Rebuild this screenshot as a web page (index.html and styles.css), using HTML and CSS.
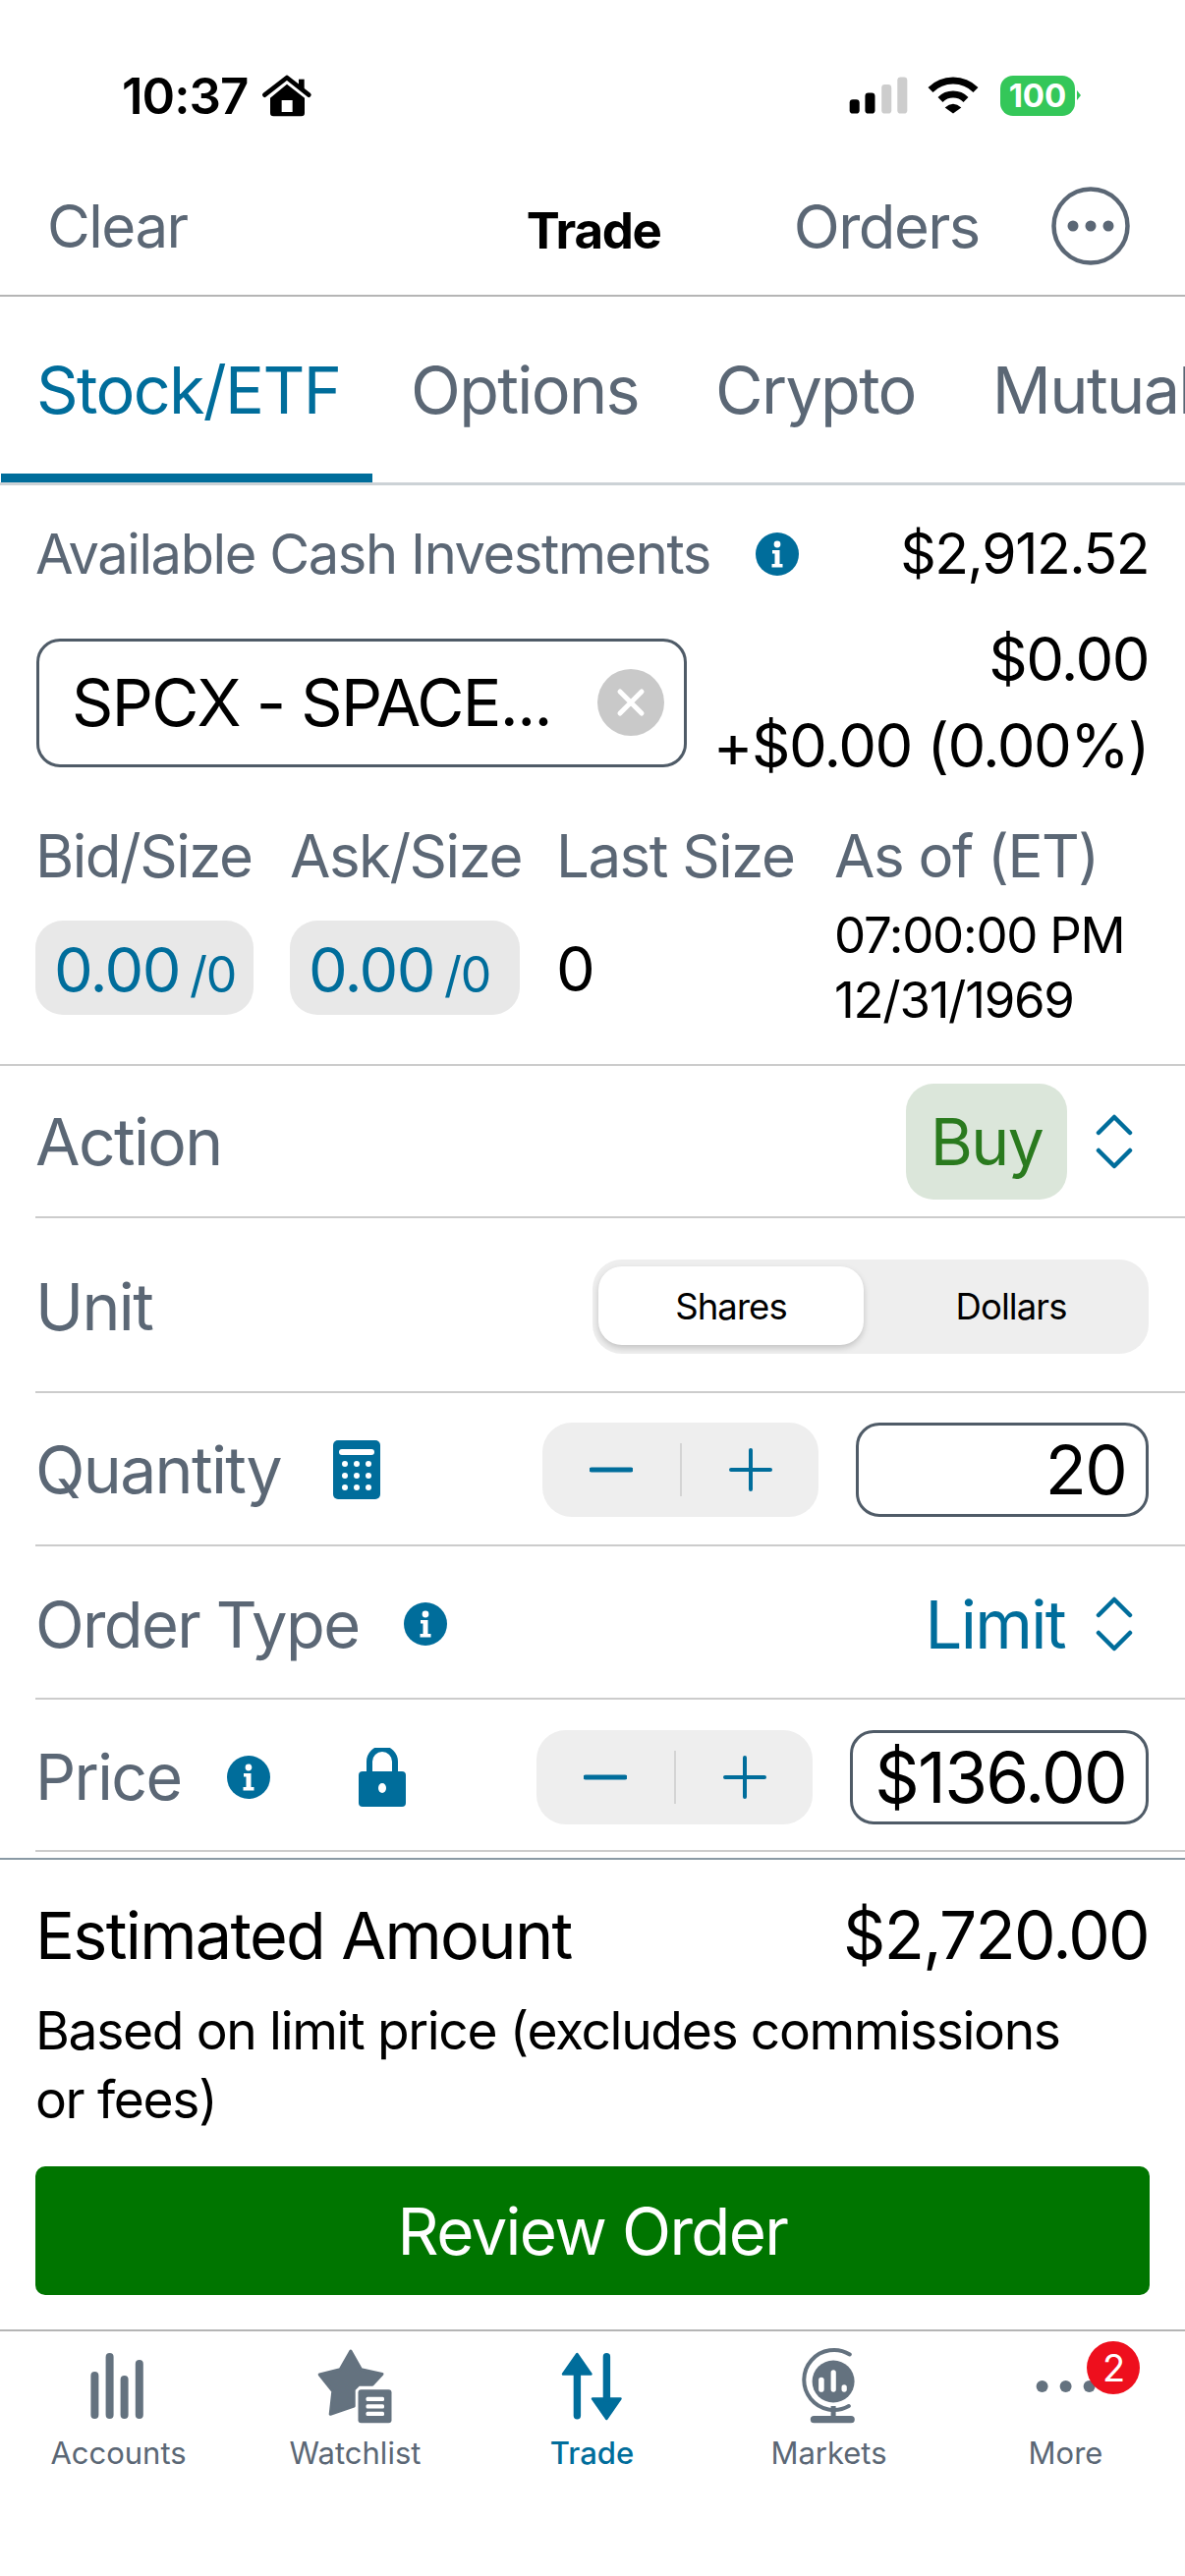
FILE: index.html

```html
<!DOCTYPE html>
<html lang="en">
<head>
  <meta charset="UTF-8" />
  <meta name="viewport" content="width=device-width, initial-scale=1.0"/>
  <title>Trade</title>
  <link rel="stylesheet" href="styles.css">
</head>
<body>
  <svg class="defs" width="0" height="0">
    <symbol id="info" viewBox="0 0 44 44">
      <circle cx="22" cy="22" r="22" fill="#006d9b"/>
      <circle cx="22" cy="12" r="3.400" fill="#fff"/>
      <path d="M17 18h7.500v14h3v3.500h-11V32h3V21.500h-2.500z" fill="#fff"/>
    </symbol>
    <symbol id="updown" viewBox="0 0 40 56">
      <path d="M4 19 20 3l16 16M4 37l16 16 16-16" fill="none" stroke="#006d9b" stroke-width="4.500" stroke-linecap="round" stroke-linejoin="round"/>
    </symbol>
    <symbol id="minus" viewBox="0 0 44 44">
      <path d="M2 22h40" stroke="#006d9b" stroke-width="5" stroke-linecap="round"/>
    </symbol>
    <symbol id="plus" viewBox="0 0 44 44">
      <path d="M2 22h40M22 2v40" stroke="#006d9b" stroke-width="4" stroke-linecap="round"/>
    </symbol>
  </svg>

  <div class="status">
    <span class="clock">10:37</span>
    <svg class="house" viewBox="500 75 156 135">
      <path d="M510 140 578 87l67 53" fill="none" stroke="#000" stroke-width="14" stroke-linecap="round" stroke-linejoin="round"/>
      <path d="M614 92h17v30h-17z"/>
      <path fill-rule="evenodd" d="M578 107l54 42v46q0 10-10 10h-85q-10 0-10-10v-46zM562 156v36h33v-36z"/>
    </svg>
    <div class="status-right">
      <svg class="signal" viewBox="70 50 185 125">
        <rect x="75" y="125" width="30" height="43" rx="10"/>
        <rect x="122" y="105" width="30" height="63" rx="10"/>
        <rect x="172" y="80" width="30" height="88" rx="10" fill="#cdcdcd"/>
        <rect x="220" y="57" width="30" height="111" rx="10" fill="#cdcdcd"/>
      </svg>
      <svg class="wifi" viewBox="310 50 162 125">
        <path d="M322 96A97.500 97.500 0 0 1 460 96M352 126A55 55 0 0 1 430 126" fill="none" stroke="#000" stroke-width="21"/>
        <path d="M366 150Q391 128 416 150L391 168z"/>
      </svg>
      <div class="battery">100</div>
    </div>
  </div>

  <div class="nav">
    <span class="nav-link">Clear</span>
    <span class="nav-title">Trade</span>
    <span class="nav-link nav-orders">Orders</span>
    <svg class="more-circle" viewBox="0 0 80 80">
      <circle cx="40" cy="40" r="37.500" fill="none" stroke="#5b6775" stroke-width="4.500"/>
      <circle cx="22" cy="40" r="5.500" fill="#5b6775"/>
      <circle cx="40" cy="40" r="5.500" fill="#5b6775"/>
      <circle cx="58" cy="40" r="5.500" fill="#5b6775"/>
    </svg>
  </div>

  <div class="tabs">
    <span class="tab active">Stock/ETF</span>
    <span class="tab">Options</span>
    <span class="tab">Crypto</span>
    <span class="tab">Mutual</span>
  </div>

  <div class="cash">
    <span class="gray">Available Cash Investments</span>
    <svg class="info cash-info"><use href="#info"/></svg>
    <span class="cash-value">$2,912.52</span>
  </div>

  <div class="quote">
    <div class="symbol-box">
      <span class="symbol-text">SPCX - SPACE...</span>
      <svg class="clear-x" viewBox="0 0 68 68">
        <circle cx="34" cy="34" r="34" fill="#c9c9c9"/>
        <path d="M23 23l22 22M45 23 23 45" stroke="#fff" stroke-width="5" stroke-linecap="round"/>
      </svg>
    </div>
    <div class="quote-price">
      <div>$0.00</div>
      <div>+$0.00 (0.00%)</div>
    </div>
  </div>

  <div class="stats">
    <span class="stat-label">Bid/Size</span>
    <span class="stat-label">Ask/Size</span>
    <span class="stat-label">Last Size</span>
    <span class="stat-label">As of (ET)</span>
    <div class="pill bid"><span>0.00</span> <small>/0</small></div>
    <div class="pill ask"><span>0.00</span> <small>/0</small></div>
    <div class="last">0</div>
    <div class="asof">07:00:00 PM<br>12/31/1969</div>
  </div>

  <div class="row row-action">
    <span class="gray label">Action</span>
    <span class="buy">Buy</span>
    <svg class="updown"><use href="#updown"/></svg>
  </div>

  <div class="row row-unit">
    <span class="gray label">Unit</span>
    <div class="segment">
      <span class="seg-item selected">Shares</span>
      <span class="seg-item seg-other">Dollars</span>
    </div>
  </div>

  <div class="row row-qty">
    <span class="gray label">Quantity</span>
    <svg class="calc" viewBox="0 0 48 60">
      <rect width="48" height="60" rx="5" fill="#006d9b"/>
      <rect x="6" y="9" width="36" height="6" rx="3" fill="#fff"/>
      <g fill="#fff">
        <circle cx="12" cy="24" r="3"/><circle cx="24" cy="24" r="3"/><circle cx="36" cy="24" r="3"/>
        <circle cx="12" cy="36" r="3"/><circle cx="24" cy="36" r="3"/><circle cx="36" cy="36" r="3"/>
        <circle cx="12" cy="48" r="3"/><circle cx="24" cy="48" r="3"/><circle cx="36" cy="48" r="3"/>
      </g>
    </svg>
    <div class="stepper">
      <span class="step"><svg class="step-icon"><use href="#minus"/></svg></span>
      <span class="step step-plus"><svg class="step-icon"><use href="#plus"/></svg></span>
    </div>
    <div class="field qty-field">20</div>
  </div>

  <div class="row row-type">
    <span class="gray label">Order Type</span>
    <svg class="info type-info"><use href="#info"/></svg>
    <span class="limit">Limit</span>
    <svg class="updown"><use href="#updown"/></svg>
  </div>

  <div class="row row-price">
    <span class="gray label">Price</span>
    <svg class="info price-info"><use href="#info"/></svg>
    <svg class="lock" viewBox="0 0 48 60">
      <path d="M11 26V14a13 13 0 0 1 26 0v12" fill="none" stroke="#006d9b" stroke-width="6"/>
      <rect y="24" width="48" height="36" rx="4" fill="#006d9b"/>
      <ellipse cx="24" cy="41" rx="4" ry="5" fill="#fff"/>
    </svg>
    <div class="stepper">
      <span class="step"><svg class="step-icon"><use href="#minus"/></svg></span>
      <span class="step step-plus"><svg class="step-icon"><use href="#plus"/></svg></span>
    </div>
    <div class="field price-field">$136.00</div>
  </div>

  <div class="summary">
    <div class="summary-head">
      <span class="est-label">Estimated Amount</span>
      <span>$2,720.00</span>
    </div>
    <p class="note">Based on limit price (excludes commissions or fees)</p>
    <div class="review">Review Order</div>
  </div>

  <div class="tabbar">
    <div class="bar-item">
      <svg class="bar-icon" viewBox="0 0 84 80" fill="#64727f">
        <rect x="13.400" y="25" width="8" height="48" rx="4"/>
        <rect x="28.600" y="6" width="8" height="67" rx="4"/>
        <rect x="43.600" y="29" width="8" height="44" rx="4"/>
        <rect x="58.800" y="13" width="8" height="60" rx="4"/>
      </svg>
      <span>Accounts</span>
    </div>
    <div class="bar-item">
      <svg class="bar-icon" viewBox="0 0 84 80" fill="#64727f">
        <path d="M36.900 4 47.500 22.700 69 27.500 59 38.300H45.200L40.200 43.300V60L16.200 68.300 18.800 45 5.200 28 26.200 22.700z" stroke="#64727f" stroke-width="3" stroke-linejoin="round"/>
        <rect x="44.500" y="43.300" width="34" height="34" rx="3"/>
        <g fill="#fff">
          <rect x="52.500" y="50.700" width="18.500" height="4.300" rx="1.500"/>
          <rect x="52.500" y="58.300" width="18.500" height="4.300" rx="1.500"/>
          <rect x="52.500" y="65.800" width="18.500" height="4.300" rx="1.500"/>
        </g>
      </svg>
      <span>Watchlist</span>
    </div>
    <div class="bar-item current">
      <svg class="bar-icon" viewBox="0 0 84 80" fill="#006d9b">
        <path d="M26.300 7 40.500 27.500H12z" stroke="#006d9b" stroke-width="2.500" stroke-linejoin="round"/>
        <rect x="22.700" y="24" width="7.400" height="49.500" rx="3.700"/>
        <path d="M56.300 73 42 52.500H70.500z" stroke="#006d9b" stroke-width="2.500" stroke-linejoin="round"/>
        <rect x="52.700" y="6" width="7.400" height="50" rx="3.700"/>
      </svg>
      <span>Trade</span>
    </div>
    <div class="bar-item">
      <svg class="bar-icon" viewBox="0 0 84 80">
        <circle cx="46.100" cy="35" r="21.500" fill="#64727f"/>
        <path d="M62.800 7.500A30.500 30.500 0 1 0 61.800 60" fill="none" stroke="#64727f" stroke-width="4" stroke-linecap="round"/>
        <rect x="43.600" y="60" width="5" height="12" fill="#64727f"/>
        <rect x="22.800" y="70" width="45" height="7.300" rx="3.600" fill="#64727f"/>
        <g fill="#fff">
          <rect x="31.100" y="30.700" width="5.600" height="15" rx="2.800"/>
          <rect x="43.600" y="23.300" width="5.200" height="22.400" rx="2.600"/>
          <rect x="54.500" y="38.300" width="5.300" height="7.400" rx="2.600"/>
        </g>
      </svg>
      <span>Markets</span>
    </div>
    <div class="bar-item">
      <svg class="bar-icon" viewBox="0 0 84 80" fill="#64727f">
        <circle cx="17.600" cy="40" r="6"/>
        <circle cx="41.600" cy="40" r="6"/>
        <circle cx="65.600" cy="40" r="6"/>
      </svg>
      <span>More</span>
      <b class="badge">2</b>
    </div>
  </div>
</body>
</html>
```

FILE: styles.css

```css
* {
  box-sizing: border-box;
  letter-spacing: -0.025em;
}
html, body {
  margin: 0;
  background: white;
}
body {
  width: 1206px;
  height: 2622px;
  overflow: hidden;
  font-family: Inter, 'Noto Sans', sans-serif;
  color: #000;
}
.defs {
  position: absolute;
}
.gray {
  color: #5b6775;
}

/* status bar */
.status {
  display: flex;
  align-items: center;
  height: 160px;
  padding: 34px 112px 0 124px;
}
.clock {
  font-size: 51px;
  font-weight: 600;
  letter-spacing: -1px;
}
.house {
  width: 52px;
  height: 45px;
  margin-left: 14px;
}
.status-right {
  display: flex;
  align-items: center;
  margin-left: auto;
}
.signal {
  width: 62px;
  height: 42px;
}
.wifi {
  width: 54px;
  height: 42px;
  margin-left: 18px;
}
.battery {
  position: relative;
  width: 76px;
  height: 41px;
  margin-left: 21px;
  background: #34c759;
  border-radius: 13px;
  color: white;
  font-size: 33px;
  font-weight: 700;
  letter-spacing: 0;
  line-height: 41px;
  text-align: center;
}
.battery::after {
  content: "";
  position: absolute;
  left: 78px;
  top: 15px;
  border-left: 4px solid #34c759;
  border-top: 5px solid transparent;
  border-bottom: 5px solid transparent;
}

/* top nav */
.nav {
  display: flex;
  align-items: center;
  height: 142px;
  border-bottom: 2px solid #b5b5b5;
  padding: 0 56px 0 48px;
}
.nav-link {
  font-size: 60px;
  color: #5b6775;
}
.nav-title {
  margin-left: 345px;
  padding-top: 8px;
  font-size: 51px;
  font-weight: 650;
}
.nav-orders {
  margin-left: 135px;
  font-size: 61.500px;
}
.more-circle {
  width: 80px;
  height: 80px;
  margin-left: auto;
}

/* sub tabs */
.tabs {
  display: flex;
  height: 192px;
  padding-left: 1px;
  overflow: hidden;
  border-bottom: 3px solid #ccd2d6;
}
.tab {
  flex: none;
  padding: 0 39px;
  height: 189px;
  line-height: 190px;
  font-size: 66.500px;
  color: #5b6775;
}
.tab.active {
  width: 378px;
  padding: 0 36px;
  color: #006d9b;
  border-bottom: 9px solid #006d9b;
}

/* cash + quote */
.cash {
  display: flex;
  align-items: center;
  height: 133px;
  padding: 6px 37px 0 36px;
  font-size: 56px;
}
.info {
  width: 44px;
  height: 44px;
  flex: none;
}
.cash-info {
  margin-left: 46px;
}
.cash-value {
  margin-left: auto;
  font-size: 57px;
}
.quote {
  display: flex;
  align-items: center;
  justify-content: space-between;
  height: 176px;
  padding: 0 37px;
}
.symbol-box {
  display: flex;
  align-items: center;
  justify-content: space-between;
  width: 662px;
  height: 131px;
  padding: 0 20px 0 33px;
  border: 3px solid #4f5b67;
  border-radius: 24px;
  font-size: 66px;
}
.clear-x {
  width: 68px;
  height: 68px;
}
.quote-price {
  font-size: 61.500px;
  line-height: 88px;
  text-align: right;
}
.stats {
  display: grid;
  grid-template-columns: 259px 271px 283px 1fr;
  align-items: center;
  padding: 34px 0 32px 36px;
  border-bottom: 2px solid #ccc;
}
.stat-label {
  font-size: 60px;
  line-height: 68px;
  margin-bottom: 14px;
  color: #5b6775;
}
.pill {
  display: flex;
  align-items: baseline;
  gap: 10px;
  height: 96px;
  line-height: 100px;
  padding-left: 19px;
  background: #e8e8e8;
  border-radius: 28px;
  color: #006d9b;
  font-size: 63px;
}
.pill small {
  font-size: 50px;
}
.bid {
  width: 222px;
}
.ask {
  width: 234px;
}
.last {
  padding-top: 2px;
  font-size: 63px;
}
.asof {
  font-size: 51px;
  line-height: 66px;
}

/* form rows */
.row {
  display: flex;
  align-items: center;
  margin-left: 36px;
  padding-right: 37px;
  border-bottom: 2px solid #ccc;
}
.label {
  font-size: 66px;
}
.row-action {
  height: 155px;
}
.row-unit {
  height: 178px;
  padding-top: 3px;
}
.row-qty {
  height: 156px;
  padding-top: 2px;
}
.row-type {
  height: 156px;
  padding-top: 4px;
}
.row-type .label {
  font-size: 65px;
}
.row-price {
  height: 155px;
  padding-top: 5px;
}
.row-price .label {
  font-size: 64.500px;
}
.buy {
  margin-left: auto;
  width: 164px;
  height: 118px;
  line-height: 118px;
  text-align: center;
  background: #dbe6da;
  border-radius: 28px;
  color: #2a7a1e;
  font-size: 66px;
}
.updown {
  width: 40px;
  height: 56px;
  margin-left: 28px;
  margin-right: 15px;
}
.limit {
  margin-left: auto;
  font-size: 67px;
  color: #006d9b;
}
.row-type .updown {
  margin-left: 30px;
}
.type-info {
  margin-left: 46px;
}
.segment {
  display: flex;
  width: 566px;
  height: 96px;
  margin-left: auto;
  padding: 7px 0 9px 6px;
  background: #eee;
  border-radius: 30px;
  font-size: 36.500px;
}
.seg-item {
  flex: 1;
  line-height: 82px;
  text-align: center;
}
.seg-other {
  padding-left: 10px;
}
.selected {
  flex: none;
  width: 270px;
  background: white;
  border-radius: 24px;
  box-shadow: 0 3px 6px rgba(0, 0, 0, 0.18);
}
.calc {
  width: 48px;
  height: 60px;
  margin-left: 53px;
}
.stepper {
  display: flex;
  align-items: center;
  width: 281px;
  height: 96px;
  margin-left: auto;
  background: #eee;
  border-radius: 30px;
}
.step {
  display: flex;
  justify-content: center;
  width: 140px;
}
.step-plus {
  width: 141px;
  height: 54px;
  align-items: center;
  border-left: 2px solid #d4d4d4;
}
.step-icon {
  width: 44px;
  height: 44px;
}
.field {
  height: 96px;
  margin-left: 38px;
  padding-right: 20px;
  line-height: 90px;
  text-align: right;
  border: 3px solid #4f5b67;
  border-radius: 24px;
  font-size: 69px;
}
.qty-field {
  width: 298px;
}
.price-field {
  width: 304px;
  font-size: 71px;
}
.price-info {
  margin-left: 46px;
}
.lock {
  width: 48px;
  height: 60px;
  margin-left: 90px;
}

/* estimate + button */
.summary {
  margin-top: 6px;
  border-top: 2px solid #8a9aa5;
  padding: 33px 36px 0;
}
.summary-head {
  display: flex;
  justify-content: space-between;
  font-size: 67.500px;
  line-height: 88px;
  padding-right: 1px;
}
.est-label {
  font-size: 66.500px;
}
.note {
  margin: 18px 40px 0 0;
  font-size: 53.300px;
  line-height: 70px;
}
.review {
  height: 131px;
  margin-top: 33px;
  margin-bottom: 35px;
  line-height: 133px;
  text-align: center;
  background: #007500;
  border-radius: 10px;
  color: white;
  font-size: 65.500px;
}

/* bottom tab bar */
.tabbar {
  display: grid;
  grid-template-columns: repeat(5, 1fr);
  border-top: 2px solid #b5b5b5;
  padding: 16px 1px 0 0;
}
.bar-item {
  position: relative;
  display: flex;
  flex-direction: column;
  align-items: center;
  color: #5b6775;
  font-size: 31px;
  line-height: 36px;
}
.bar-item span {
  letter-spacing: 0;
}
.bar-icon {
  width: 84px;
  height: 80px;
  margin-bottom: 10px;
}
.bar-item.current {
  color: #006d9b;
  font-weight: 500;
}
.badge {
  position: absolute;
  left: 142px;
  top: -6px;
  width: 54px;
  height: 54px;
  line-height: 54px;
  text-align: center;
  background: #ee0f1d;
  border-radius: 50%;
  color: white;
  font-size: 38px;
  font-weight: 400;
}
```
